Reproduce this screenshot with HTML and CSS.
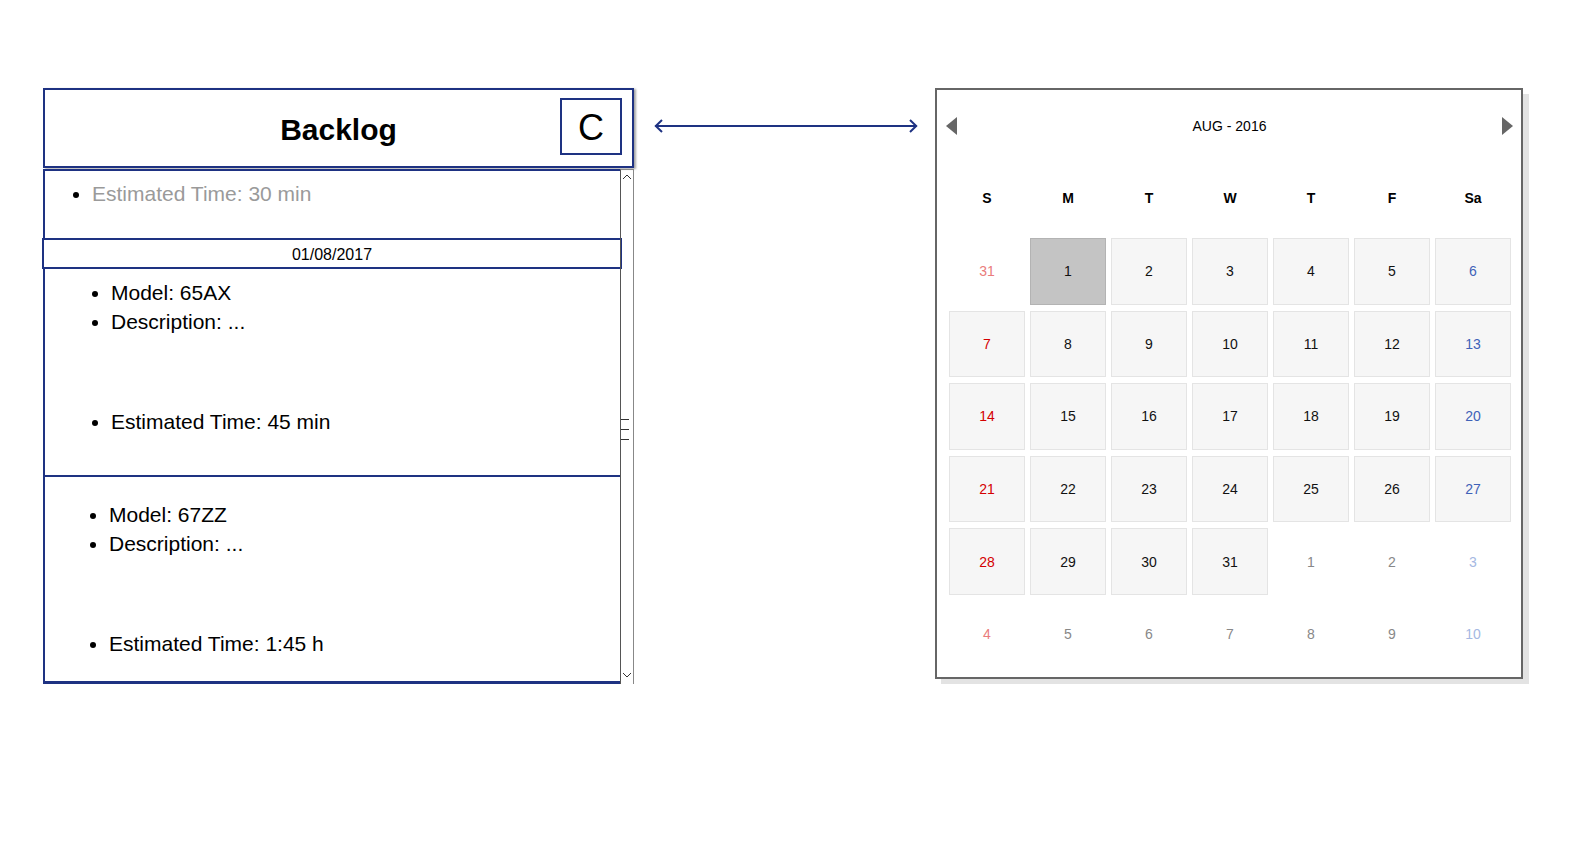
FILE: index.html
```html
<!DOCTYPE html>
<html lang="en">
<head>
<meta charset="utf-8">
<title>Backlog & Calendar</title>
<link rel="stylesheet" href="styles.css">
</head>
<body>
<div class="page">
  <section class="backlog">
    <header class="bl-head">
      <span class="bl-spacer"></span>
      <h1 class="bl-title">Backlog</h1>
      <button class="bl-btn" type="button">C</button>
    </header>
    <div class="bl-body">
      <div class="bl-list">
        <div class="bl-sec bl-sec-first">
          <ul class="bl-ul muted"><li>Estimated Time: 30 min</li></ul>
        </div>
        <div class="bl-date">01/08/2017</div>
        <div class="bl-sec bl-sec-a">
          <ul class="bl-ul"><li>Model: 65AX</li><li>Description: ...</li></ul>
          <ul class="bl-ul bl-time"><li>Estimated Time: 45 min</li></ul>
        </div>
        <div class="bl-sec bl-sec-b">
          <ul class="bl-ul"><li>Model: 67ZZ</li><li>Description: ...</li></ul>
          <ul class="bl-ul bl-time"><li>Estimated Time: 1:45 h</li></ul>
        </div>
      </div>
      <div class="scrollbar">
        <svg class="sb-arrow" width="12" height="10" viewBox="0 0 12 10"><polyline points="2,7 6,3 10,7" fill="none" stroke="#333" stroke-width="1"/></svg>
        <div class="sb-grip"><span></span><span></span><span></span></div>
        <svg class="sb-arrow" width="12" height="10" viewBox="0 0 12 10"><polyline points="2,3 6,7 10,3" fill="none" stroke="#333" stroke-width="1"/></svg>
      </div>
    </div>
  </section>

  <svg class="connector" width="264" height="14" viewBox="0 0 264 14">
    <line x1="1.5" y1="7" x2="262.5" y2="7" stroke="#1e3282" stroke-width="2"/>
    <polyline points="8,1 1.8,7 8,13" fill="none" stroke="#1e3282" stroke-width="2"/>
    <polyline points="256,1 262.2,7 256,13" fill="none" stroke="#1e3282" stroke-width="2"/>
  </svg>

  <section class="calendar">
    <div class="cal-nav">
      <span class="cal-prev"></span>
      <span class="cal-month">AUG - 2016</span>
      <span class="cal-next"></span>
    </div>
    <div class="cal-weekdays">
      <span>S</span><span>M</span><span>T</span><span>W</span><span>T</span><span>F</span><span>Sa</span>
    </div>
    <div class="cal-grid">
      <span class="day other sun">31</span>
      <span class="day cur selected">1</span>
      <span class="day cur">2</span>
      <span class="day cur">3</span>
      <span class="day cur">4</span>
      <span class="day cur">5</span>
      <span class="day cur sat">6</span>

      <span class="day cur sun">7</span>
      <span class="day cur">8</span>
      <span class="day cur">9</span>
      <span class="day cur">10</span>
      <span class="day cur">11</span>
      <span class="day cur">12</span>
      <span class="day cur sat">13</span>

      <span class="day cur sun">14</span>
      <span class="day cur">15</span>
      <span class="day cur">16</span>
      <span class="day cur">17</span>
      <span class="day cur">18</span>
      <span class="day cur">19</span>
      <span class="day cur sat">20</span>

      <span class="day cur sun">21</span>
      <span class="day cur">22</span>
      <span class="day cur">23</span>
      <span class="day cur">24</span>
      <span class="day cur">25</span>
      <span class="day cur">26</span>
      <span class="day cur sat">27</span>

      <span class="day cur sun">28</span>
      <span class="day cur">29</span>
      <span class="day cur">30</span>
      <span class="day cur">31</span>
      <span class="day other">1</span>
      <span class="day other">2</span>
      <span class="day other sat">3</span>

      <span class="day other sun">4</span>
      <span class="day other">5</span>
      <span class="day other">6</span>
      <span class="day other">7</span>
      <span class="day other">8</span>
      <span class="day other">9</span>
      <span class="day other sat">10</span>
    </div>
  </section>
</div>
</body>
</html>
```

FILE: styles.css
```css
* { box-sizing: border-box; }

body {
  margin: 0;
  background: #fff;
  font-family: "Liberation Sans", Arial, sans-serif;
  color: #000;
}

.page {
  display: flex;
  align-items: flex-start;
  padding: 88px 0 0 43px;
}

/* ---------- Backlog ---------- */
.backlog {
  width: 591px;
  flex: none;
}

.bl-head {
  height: 80px;
  border: 2px solid #1e3282;
  display: grid;
  grid-template-columns: 1fr auto 1fr;
  align-items: center;
  box-shadow: 2px 1px 2px rgba(0, 0, 0, 0.35);
  background: #fff;
}

.bl-title {
  margin: 0;
  padding-top: 4px;
  font-size: 30px;
  font-weight: 700;
  line-height: 36px;
}

.bl-btn {
  justify-self: end;
  align-self: start;
  margin: 8px 10px 0 0;
  width: 62px;
  height: 57px;
  border: 2px solid #1e3282;
  background: #fff;
  padding: 0;
  font-family: "Liberation Sans", Arial, sans-serif;
  font-size: 36px;
  line-height: 56px;
  color: #000;
}

.bl-body {
  display: flex;
  margin-top: 1px;
  height: 515px;
}

.bl-list {
  width: 577px;
  border-left: 2px solid #1e3282;
  border-top: 2px solid #1e3282;
  border-bottom: 3px solid #1e3282;
}

.bl-sec-first {
  height: 67px;
  padding: 8px 0 0 47px;
}

.bl-sec-a {
  height: 208px;
  padding: 9px 0 0 66px;
  border-bottom: 2px solid #1e3282;
}

.bl-sec-b {
  height: 204px;
  padding: 23px 0 0 64px;
}

.bl-ul {
  margin: 0;
  padding: 0;
  font-size: 21px;
  line-height: 29px;
}

.bl-time {
  margin-top: 71px;
}

.muted li { color: #9a9a9a; }
.muted li::marker { color: #000; }

.bl-date {
  height: 31px;
  margin: 0 -2px 0 -3px;
  border: 2px solid #1e3282;
  text-align: center;
  font-size: 16px;
  line-height: 29px;
  background: #fff;
}

.scrollbar {
  width: 14px;
  height: 516px;
  border-left: 1px solid #555;
  border-right: 1px solid #888;
  border-bottom: 1px solid #888;
  border-top: 1px solid #888;
  display: flex;
  flex-direction: column;
  align-items: center;
  justify-content: space-between;
  padding: 2px 0 4px;
}

.sb-arrow { display: block; }

.sb-grip {
  display: flex;
  flex-direction: column;
  gap: 9px;
  align-self: flex-start;
  margin-top: 6px;
}

.sb-grip span {
  display: block;
  width: 8px;
  height: 1px;
  background: #333;
}

/* ---------- Connector ---------- */
.connector {
  flex: none;
  display: block;
  margin: 31px 0 0 20px;
}

/* ---------- Calendar ---------- */
.calendar {
  flex: none;
  width: 588px;
  height: 591px;
  margin-left: 17px;
  border: 2px solid #666;
  background: #fff;
  box-shadow: 6px 6px 0 #e3e3e3;
  padding: 0 10px 0 12px;
}

.cal-nav {
  height: 71px;
  margin: 0 -2px 0 -3px;
  display: flex;
  align-items: center;
  justify-content: space-between;
}

.cal-prev,
.cal-next {
  width: 0;
  height: 0;
  border-top: 9px solid transparent;
  border-bottom: 9px solid transparent;
}

.cal-prev { border-right: 11px solid #666; }
.cal-next { border-left: 11px solid #666; }

.cal-month {
  font-size: 14px;
}

.cal-weekdays,
.cal-grid {
  display: grid;
  grid-template-columns: repeat(7, 76px);
  column-gap: 5px;
}

.cal-weekdays {
  height: 74px;
  align-items: center;
  text-align: center;
  font-size: 14px;
  font-weight: 700;
}

.cal-grid {
  margin-top: 3px;
  grid-auto-rows: 66.6px;
  row-gap: 6px;
}

.day {
  display: flex;
  align-items: center;
  justify-content: center;
  font-size: 14px;
  color: #111;
}

.day.cur {
  background: #f6f6f6;
  border: 1px solid #e4e4e4;
}

.day.selected {
  background: #c4c4c4;
  border-color: #b3b3b3;
}

.day.cur.sun { color: #d40000; }
.day.cur.sat { color: #3f62b8; }

.day.other { color: #888; }
.day.other.sun { color: #ea7c7c; }
.day.other.sat { color: #a5b8e2; }
```
